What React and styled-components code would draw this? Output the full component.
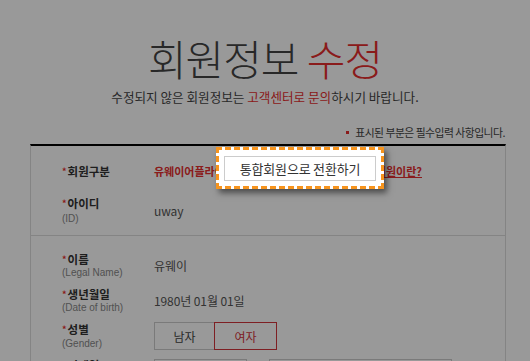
import React from "react";
import styled, { createGlobalStyle } from "styled-components";

const GlobalStyle = createGlobalStyle`
  html, body { margin: 0; padding: 0; background: #fff; }
  body {
    font-family: "Noto Sans CJK KR", "Noto Sans", sans-serif;
    width: 530px;
    height: 361px;
    overflow: hidden;
  }
  * { box-sizing: border-box; }
`;

const Page = styled.div`
  position: relative;
  width: 530px;
  height: 361px;
  overflow: hidden;
  background: #fff;
`;

const Header = styled.header`
  text-align: center;
  padding-top: 33px;
`;

const Title = styled.h1`
  margin: 0;
  font-size: 42px;
  font-weight: 300;
  line-height: 50px;
  letter-spacing: -1px;
  color: #444;
`;

const Red = styled.span`
  color: #e62e2e;
`;

const Lead = styled.p`
  margin: 6px 0 0;
  font-size: 12.6px;
  line-height: 16px;
  color: #444;
`;

const Notice = styled.p`
  margin: 20px 0 0;
  padding-right: 25px;
  text-align: right;
  font-size: 10.8px;
  letter-spacing: -0.5px;
  line-height: 14px;
  color: #444;
`;

const Bullet = styled.span`
  display: inline-block;
  width: 3px;
  height: 3px;
  background: #e62e2e;
  margin-right: 6px;
  vertical-align: 3px;
`;

const Star = styled.span`
  color: #e62e2e;
  font-size: 9px;
  margin-right: 1px;
  vertical-align: 1px;
`;

const Box = styled.div`
  margin: 5px 24px 0 30px;
  border-top: 2px solid #000;
  border-left: 1px solid #ddd;
  border-right: 1px solid #ddd;
`;

const Section = styled.div`
  display: flex;
  flex-direction: column;
  gap: ${(p) => p.$gap}px;
  padding: ${(p) => p.$pt}px 0 ${(p) => p.$pb}px 31px;
  border-bottom: ${(p) => (p.$last ? "none" : "1px solid #ddd")};
`;

const Row = styled.div`
  display: grid;
  grid-template-columns: 92px 1fr;
  align-items: center;
`;

const Label = styled.div`
  display: flex;
  flex-direction: column;
`;

const Name = styled.span`
  font-size: 11.5px;
  font-weight: 700;
  line-height: 14px;
  color: #333;
`;

const Sub = styled.span`
  font-family: "Liberation Sans", Arial, sans-serif;
  font-size: 10px;
  line-height: 12px;
  margin-top: ${(p) => p.$gap || 0}px;
  color: #888;
`;

const Value = styled.span`
  font-size: 12px;
  line-height: 16px;
  letter-spacing: -0.1px;
  color: #555;
`;

const ValueLine = styled.div`
  width: 268px;
  display: flex;
  justify-content: space-between;
  align-items: center;
  font-size: 11px;
  font-weight: 700;
  line-height: 16px;
  color: #e62e2e;
`;

const Link = styled.a`
  color: #e62e2e;
  text-decoration: underline;
`;

const Toggle = styled.div`
  display: flex;
`;

const ToggleBtn = styled.button`
  width: ${(p) => p.$w}px;
  height: 28px;
  background: #fff;
  border: 1px solid ${(p) => (p.$active ? "#d2343b" : "#ccc")};
  margin-left: ${(p) => (p.$active ? "-1px" : "0")};
  position: relative;
  font-family: inherit;
  font-size: 12px;
  color: ${(p) => (p.$active ? "#d2343b" : "#444")};
  padding: 0;
`;

const Inputs = styled.div`
  display: flex;
  align-items: center;
  gap: 8px;
`;

const Input = styled.div`
  width: ${(p) => p.$w}px;
  height: 26px;
  border: 1px solid #ccc;
  background: #fff;
`;

const At = styled.span`
  font-size: 12px;
  color: #555;
  width: 6px;
`;

const Overlay = styled.div`
  position: absolute;
  inset: 0;
  background: rgba(0, 0, 0, 0.4);
  z-index: 1;
`;

const Popup = styled.div`
  position: absolute;
  left: 216px;
  top: 147px;
  width: 168px;
  height: 42px;
  border: 3px dashed #f7941d;
  background: #fff;
  box-shadow: 3px 4px 6px rgba(0, 0, 0, 0.5);
  z-index: 2;
  display: flex;
  align-items: center;
  justify-content: center;
`;

const PopButton = styled.button`
  width: 152px;
  height: 25px;
  border: 1px solid #ccc;
  background: #fff;
  font-family: inherit;
  font-size: 13px;
  letter-spacing: -0.2px;
  color: #333;
  padding: 0;
`;

function Field({ name, sub, subGap, children }) {
  return (
    <Row>
      <Label>
        <Name>
          <Star>*</Star>
          {name}
        </Name>
        {sub && <Sub $gap={subGap}>{sub}</Sub>}
      </Label>
      {children}
    </Row>
  );
}

export default function App() {
  return (
    <Page>
      <GlobalStyle />
      <Header>
        <Title>
          회원정보 <Red>수정</Red>
        </Title>
        <Lead>
          수정되지 않은 회원정보는 <Red>고객센터로 문의</Red>하시기 바랍니다.
        </Lead>
      </Header>
      <Notice>
        <Bullet />표시된 부분은 필수입력 사항입니다.
      </Notice>
      <Box>
        <Section $pt={17} $pb={10} $gap={17}>
          <Field name="회원구분">
            <ValueLine>
              <span>유웨이어플라이</span>
              <Link>통합회원이란?</Link>
            </ValueLine>
          </Field>
          <Field name="아이디" sub="(ID)" subGap={2}>
            <Value>uway</Value>
          </Field>
        </Section>
        <Section $pt={16} $pb={14} $gap={8} $last>
          <Field name="이름" sub="(Legal Name)">
            <Value>유웨이</Value>
          </Field>
          <Field name="생년월일" sub="(Date of birth)">
            <Value>1980년 01월 01일</Value>
          </Field>
          <Field name="성별" sub="(Gender)" subGap={1}>
            <Toggle>
              <ToggleBtn $w={61}>남자</ToggleBtn>
              <ToggleBtn $w={63} $active>
                여자
              </ToggleBtn>
            </Toggle>
          </Field>
          <Field name="이메일" sub="(E-mail)">
            <Inputs>
              <Input $w={93} />
              <At>@</At>
              <Input $w={183} />
            </Inputs>
          </Field>
        </Section>
      </Box>
      <Overlay />
      <Popup>
        <PopButton>통합회원으로 전환하기</PopButton>
      </Popup>
    </Page>
  );
}
